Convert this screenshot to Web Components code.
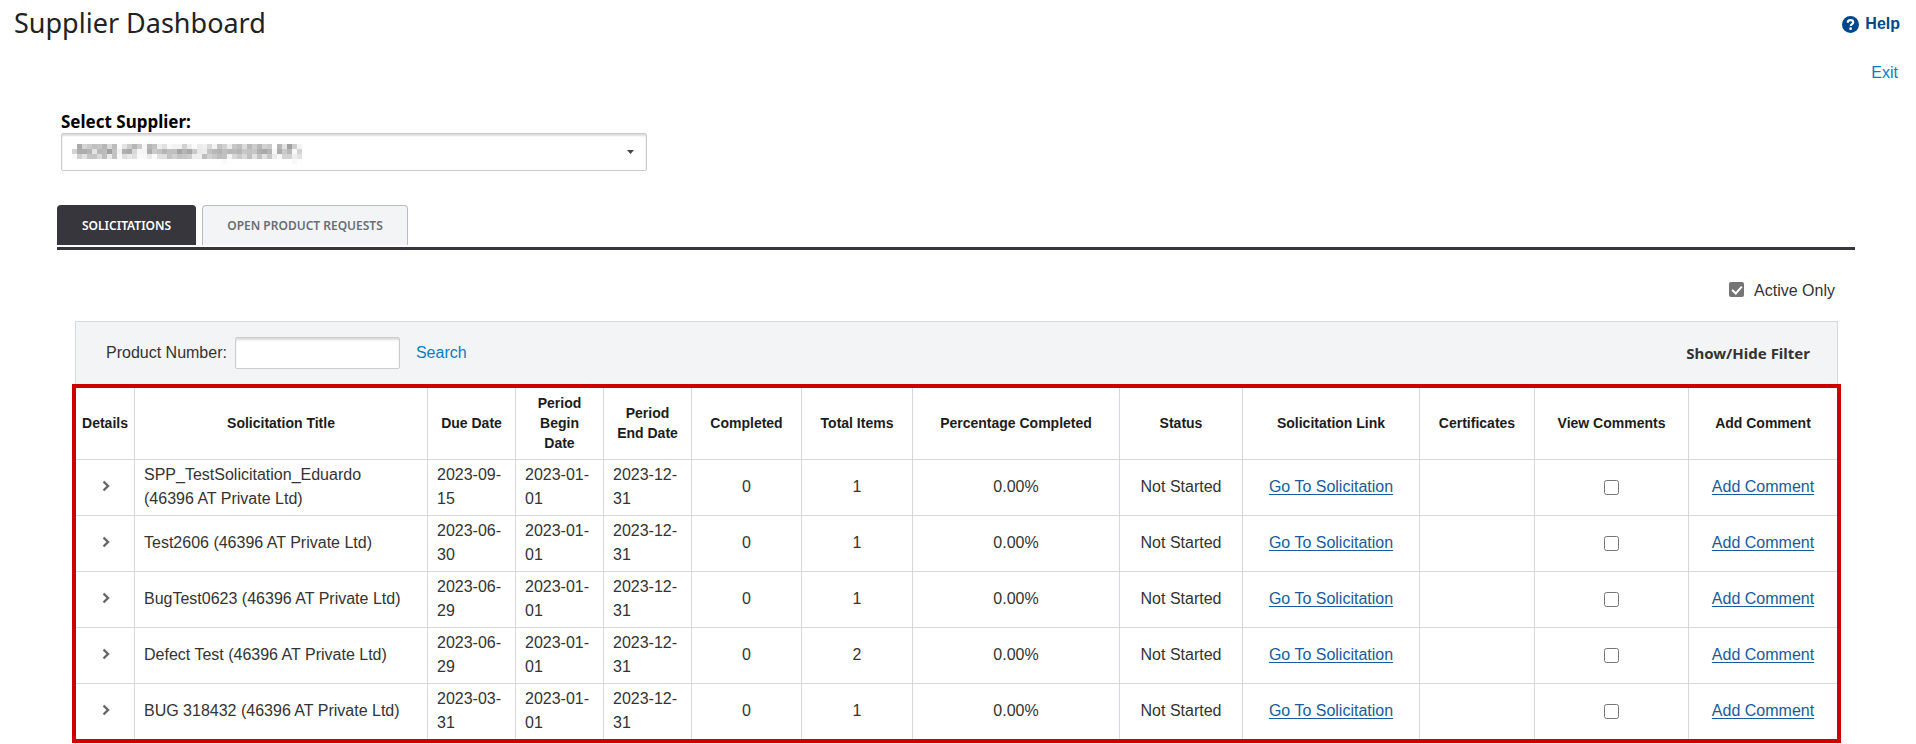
<!DOCTYPE html>
<html lang="en">
<head>
<meta charset="utf-8">
<title>Supplier Dashboard</title>
<style>
    body {
        margin: 0;
        background: #fff;
        color: #333;
        font: 16px/24px "Liberation Sans", Arial, sans-serif;
        --font-ui: "Noto Sans", "Open Sans", sans-serif;
        --line: #d6d8dd;
        --panel: #f3f4f6;
        --dark: #36363c;
        --link: #0f7dba;
    }
</style>
</head>
<body>
<supplier-dashboard>
    <page-header slot="header" heading="Supplier Dashboard"></page-header>
    <supplier-select label="Select Supplier:" value="46396 AT Private Ltd(46396 AT)"></supplier-select>
    <tab-strip>
        <tab-item selected>SOLICITATIONS</tab-item>
        <tab-item>OPEN PRODUCT REQUESTS</tab-item>
    </tab-strip>
    <active-toggle>Active Only</active-toggle>
    <solicitation-panel>
        <product-filter slot="filter"></product-filter>
        <solicitation-table id="solicitations"></solicitation-table>
    </solicitation-panel>
</supplier-dashboard>

<script>
/**
 * Small base class: renders the template of the element in an open shadow root
 */
class BaseElement extends HTMLElement {
    constructor() {
        super();
        this.attachShadow({ mode: 'open' });
    }

    connectedCallback() {
        this.shadowRoot.innerHTML = this.template();
    }

    template() {
        return '<slot></slot>';
    }
}

/**
 * Page frame: header on top, indented content below
 */
class SupplierDashboard extends BaseElement {
    template() {
        return `
            <style>
                :host {
                    display: block;
                }

                main {
                    padding: 26px 61px 0 57px;
                }
            </style>
            <slot name="header"></slot>
            <main><slot></slot></main>
        `;
    }
}

class PageHeader extends BaseElement {
    template() {
        return `
            <style>
                :host {
                    display: flex;
                    justify-content: space-between;
                    align-items: flex-start;
                    padding: 4px 16px 0 14px;
                }

                h1 {
                    margin: 0;
                    font: 400 27px/38px var(--font-ui);
                    color: #222;
                }

                nav {
                    display: flex;
                    flex-direction: column;
                    align-items: flex-end;
                    gap: 25px;
                    padding-top: 8px;
                }

                a {
                    color: var(--link);
                    text-decoration: none;
                }

                .help {
                    display: flex;
                    align-items: center;
                    gap: 6px;
                    color: #00468b;
                    font-weight: bold;
                }

                .exit {
                    padding-right: 2px;
                }
            </style>
            <h1>${this.getAttribute('heading')}</h1>
            <nav>
                <a class="help" href="#help">
                    <svg width="17" height="17" viewBox="0 0 16 16" aria-hidden="true">
                        <circle cx="8" cy="8" r="8" fill="#00468b"/>
                        <path d="M5.4 6.3C5.4 4.7 6.500 3.900 8 3.900s2.600.8 2.600 2.200c0 1.600-2.400 1.600-2.400 3.400" fill="none" stroke="#fff" stroke-width="2"/>
                        <circle cx="8.1" cy="11.9" r="1.3" fill="#fff"/>
                    </svg>
                    Help
                </a>
                <a class="exit" href="#exit">Exit</a>
            </nav>
        `;
    }
}

/**
 * Supplier drop-down, the name of the supplier is masked with a mosaic
 */
class SupplierSelect extends BaseElement {
    template() {
        return `
            <style>
                :host {
                    display: block;
                    padding: 0 4px;
                }

                label {
                    display: block;
                    font: bold 17px/22px var(--font-ui);
                    color: #000;
                }

                .field {
                    display: flex;
                    align-items: center;
                    box-sizing: border-box;
                    width: 586px;
                    max-width: 100%;
                    height: 38px;
                    padding-right: 12px;
                    border: 1px solid #ccc;
                    border-radius: 2px;
                    box-shadow: inset 0 2px 2px rgba(0, 0, 0, 0.14);
                }

                select {
                    flex: 1;
                    height: 36px;
                    padding: 0 12px;
                    border: 0;
                    background: none;
                    appearance: none;
                    font: inherit;
                    color: #444;
                    filter: url(#mosaic);
                }

                svg {
                    flex: none;
                }

                .defs {
                    position: absolute;
                }
            </style>
            <svg class="defs" width="0" height="0" aria-hidden="true">
                <filter id="mosaic" x="0" y="0" width="100%" height="100%">
                    <feGaussianBlur in="SourceGraphic" stdDeviation="1.6" result="soft"/>
                    <feFlood x="2" y="2" width="1" height="1"/>
                    <feComposite width="5" height="5"/>
                    <feTile result="dots"/>
                    <feComposite in="soft" in2="dots" operator="in"/>
                    <feMorphology operator="dilate" radius="2"/>
                </filter>
            </svg>
            <label for="supplier">${this.getAttribute('label')}</label>
            <div class="field">
                <select id="supplier"><option>${this.getAttribute('value')}</option></select>
                <svg width="7" height="4" viewBox="0 0 7 4" aria-hidden="true"><path d="M0 0h7L3.5 4z" fill="#444"/></svg>
            </div>
        `;
    }
}

class TabStrip extends BaseElement {
    template() {
        return `
            <style>
                :host {
                    display: flex;
                    gap: 6px;
                    margin-top: 34px;
                    padding-bottom: 2px;
                    border-bottom: 3px solid var(--dark);
                }
            </style>
            <slot></slot>
        `;
    }
}

class TabItem extends BaseElement {
    template() {
        return `
            <style>
                :host {
                    display: block;
                }

                button {
                    display: block;
                    height: 40px;
                    padding: 0 24px;
                    border: 1px solid #b9bbc2;
                    border-bottom: 0;
                    border-radius: 4px 4px 0 0;
                    background: var(--panel);
                    font: 600 12px/16px var(--font-ui);
                    color: #6b6d75;
                }

                :host([selected]) button {
                    border-color: var(--dark);
                    background: var(--dark);
                    color: #fff;
                }
            </style>
            <button type="button"><slot></slot></button>
        `;
    }
}

class ActiveToggle extends BaseElement {
    template() {
        return `
            <style>
                :host {
                    display: flex;
                    justify-content: flex-end;
                    padding: 29px 20px 18px;
                }

                label {
                    display: flex;
                    gap: 10px;
                }

                input {
                    appearance: none;
                    display: grid;
                    place-items: center;
                    width: 15px;
                    height: 15px;
                    margin: 3px 0 0;
                    border-radius: 2px;
                    background: #757575;
                }

                input::before {
                    content: "";
                    width: 4px;
                    height: 8px;
                    margin-top: -2px;
                    border: solid #fff;
                    border-width: 0 2px 2px 0;
                    transform: rotate(42deg);
                }
            </style>
            <label><input type="checkbox" checked><slot></slot></label>
        `;
    }
}

class SolicitationPanel extends BaseElement {
    template() {
        return `
            <style>
                :host {
                    display: block;
                    margin: 0 17px 0 18px;
                    padding-bottom: 2px;
                    border: solid var(--line);
                    border-width: 1px 1px 0;
                }

                .marked {
                    margin: 0 -4px;
                    border: 4px solid #c00;
                }
            </style>
            <slot name="filter"></slot>
            <div class="marked"><slot></slot></div>
        `;
    }
}

class ProductFilter extends BaseElement {
    template() {
        return `
            <style>
                :host {
                    display: flex;
                    justify-content: space-between;
                    align-items: center;
                    height: 62px;
                    padding: 0 27px 0 30px;
                    background: var(--panel);
                }

                form {
                    display: flex;
                    align-items: center;
                }

                input {
                    box-sizing: border-box;
                    width: 165px;
                    height: 32px;
                    margin: 0 16px 0 8px;
                    padding: 0 8px;
                    border: 1px solid #ccc;
                    border-radius: 2px;
                    background: #fff;
                    box-shadow: inset 0 2px 2px rgba(0, 0, 0, 0.14);
                    font: inherit;
                }

                a {
                    color: var(--link);
                    text-decoration: none;
                }

                button {
                    padding: 0;
                    border: 0;
                    background: none;
                    font: bold 15px/24px var(--font-ui);
                    color: #333;
                }
            </style>
            <form>
                <label for="product">Product Number:</label>
                <input id="product" type="text">
                <a href="#search">Search</a>
            </form>
            <button type="button">Show/Hide Filter</button>
        `;
    }
}

/**
 * Table of solicitations
 *
 * JavaScript:
 * document.getElementById('solicitations').setRows([{ title, due, begin, end, completed, total, percent, status }]);
 */
class SolicitationTable extends BaseElement {
    constructor() {
        super();
        this._rows = [];
        // Heading and relative width of each column
        this._columns = [
            ['Details', 59], ['Solicitation Title', 293], ['Due Date', 88],
            ['Period Begin Date', 88], ['Period End Date', 88], ['Completed', 110],
            ['Total Items', 111], ['Percentage Completed', 207], ['Status', 123],
            ['Solicitation Link', 177], ['Certificates', 115], ['View Comments', 154],
            ['Add Comment', 148]
        ];
    }

    setRows(rows) {
        this._rows = rows;
        this.shadowRoot.innerHTML = this.template();
    }

    rowTemplate(row) {
        return `
            <tr>
                <td>
                    <button type="button" aria-label="Show details">
                        <svg width="8" height="12" viewBox="0 0 8 12"><path d="M1.5 1.5L6 6l-4.5 4.5" fill="none" stroke="#666" stroke-width="2.4"/></svg>
                    </button>
                </td>
                <td class="text title">${row.title}</td>
                <td class="text">${row.due}</td>
                <td class="text">${row.begin}</td>
                <td class="text">${row.end}</td>
                <td>${row.completed}</td>
                <td>${row.total}</td>
                <td>${row.percent}</td>
                <td>${row.status}</td>
                <td><a href="#solicitation">Go To Solicitation</a></td>
                <td></td>
                <td><input type="checkbox" aria-label="View comments"></td>
                <td><a href="#comment">Add Comment</a></td>
            </tr>
        `;
    }

    template() {
        return `
            <style>
                :host {
                    display: block;
                    background: #fff;
                }

                table {
                    width: 100%;
                    table-layout: fixed;
                    border-collapse: separate;
                    border-spacing: 0;
                }

                th, td {
                    padding: 3px 8px 4px;
                    border: solid var(--line);
                    border-width: 0 1px 1px 0;
                    text-align: center;
                    vertical-align: middle;
                }

                th {
                    padding: 5px 4px 6px;
                    font-size: 14px;
                    line-height: 20px;
                    color: #1c1c1c;
                }

                th:nth-child(4), th:nth-child(5) {
                    padding-left: 10px;
                    padding-right: 10px;
                }

                th:last-child, td:last-child {
                    border-right: 0;
                }

                tr:last-child td {
                    border-bottom: 0;
                }

                .text {
                    padding-left: 9px;
                    text-align: left;
                }

                .title {
                    padding-right: 16px;
                }

                a {
                    color: #1a5a9e;
                    text-decoration: underline;
                    text-underline-offset: 2px;
                }

                button {
                    padding: 0 0 0 2px;
                    border: 0;
                    background: none;
                }

                button svg {
                    display: block;
                }

                input {
                    display: block;
                    width: 15px;
                    height: 15px;
                    margin: 0 auto;
                }
            </style>
            <table>
                <colgroup>${this._columns.map(c => `<col style="width: ${c[1]}px">`).join('')}</colgroup>
                <thead><tr>${this._columns.map(c => `<th>${c[0]}</th>`).join('')}</tr></thead>
                <tbody>${this._rows.map(row => this.rowTemplate(row)).join('')}</tbody>
            </table>
        `;
    }
}

// Register the custom elements
customElements.define('supplier-dashboard', SupplierDashboard);
customElements.define('page-header', PageHeader);
customElements.define('supplier-select', SupplierSelect);
customElements.define('tab-strip', TabStrip);
customElements.define('tab-item', TabItem);
customElements.define('active-toggle', ActiveToggle);
customElements.define('solicitation-panel', SolicitationPanel);
customElements.define('product-filter', ProductFilter);
customElements.define('solicitation-table', SolicitationTable);

const common = { begin: '2023-01-01', end: '2023-12-31', completed: 0, percent: '0.00%', status: 'Not Started' };
document.getElementById('solicitations').setRows([
    { ...common, title: 'SPP_TestSolicitation_Eduardo (46396 AT Private Ltd)', due: '2023-09-15', total: 1 },
    { ...common, title: 'Test2606 (46396 AT Private Ltd)', due: '2023-06-30', total: 1 },
    { ...common, title: 'BugTest0623 (46396 AT Private Ltd)', due: '2023-06-29', total: 1 },
    { ...common, title: 'Defect Test (46396 AT Private Ltd)', due: '2023-06-29', total: 2 },
    { ...common, title: 'BUG 318432 (46396 AT Private Ltd)', due: '2023-03-31', total: 1 }
]);
</script>
</body>
</html>
